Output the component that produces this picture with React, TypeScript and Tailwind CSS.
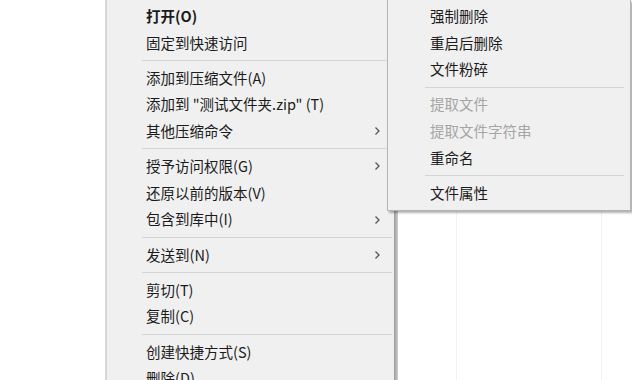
import React from "react";

type Item = { label: string; bold?: boolean; arrow?: boolean; disabled?: boolean } | "sep";

const mainItems: Item[] = [
  { label: "打开(O)", bold: true },
  { label: "固定到快速访问" },
  "sep",
  { label: "添加到压缩文件(A)" },
  { label: "添加到 \"测试文件夹.zip\" (T)" },
  { label: "其他压缩命令", arrow: true },
  "sep",
  { label: "授予访问权限(G)", arrow: true },
  { label: "还原以前的版本(V)" },
  { label: "包含到库中(I)", arrow: true },
  "sep",
  { label: "发送到(N)", arrow: true },
  "sep",
  { label: "剪切(T)" },
  { label: "复制(C)" },
  "sep",
  { label: "创建快捷方式(S)" },
  { label: "删除(D)" },
];

const subItems: Item[] = [
  { label: "强制删除" },
  { label: "重启后删除" },
  { label: "文件粉碎" },
  "sep",
  { label: "提取文件", disabled: true },
  { label: "提取文件字符串", disabled: true },
  { label: "重命名" },
  "sep",
  { label: "文件属性" },
];

const font = { fontFamily: '"Microsoft YaHei", "Noto Sans CJK SC", "Noto Sans", sans-serif' };

function Chevron() {
  return (
    <svg width="7" height="10" viewBox="0 0 7 10" className="text-[#555]">
      <path d="M1.5 1.5 L5 5 L1.5 8.5" fill="none" stroke="currentColor" strokeWidth="1.3" />
    </svg>
  );
}

export default function App() {
  return (
    <div className="relative w-[632px] h-[380px] bg-white overflow-hidden flex" style={font}>
      <div className="w-[105px] shrink-0 bg-white" />
      {/* main menu */}
      <div className="w-[293px] shrink-0 h-full bg-[#f0f0f0] border-l-2 border-[#d6d6d6] flex">
        <div className="flex-1 flex flex-col pt-[3px]">
          {mainItems.map((it, i) =>
            it === "sep" ? (
              <div key={i} className="h-[8.6px] shrink-0 flex items-center pl-[35px] pr-[2px]">
                <div className="h-px w-full bg-[#d4d4d4]" />
              </div>
            ) : (
              <div
                key={i}
                className={`h-[26.6px] shrink-0 flex items-center pl-[39px] pr-[13px] text-[14.5px] leading-none text-[#1b1b1b] ${it.bold ? "font-bold" : ""}`}
              >
                <span className="flex-1 whitespace-nowrap">{it.label}</span>
                {it.arrow && <Chevron />}
              </div>
            )
          )}
        </div>
        <div className="w-[4px] h-full bg-gradient-to-r from-[#9a9a9a] to-[#cfcfcf]" />
      </div>
      {/* background window */}
      <div className="flex-1 h-full bg-white flex">
        <div className="w-[58px]" />
        <div className="w-px h-full bg-[#f0f3f3]" />
        <div className="w-[144px]" />
        <div className="w-px h-full bg-[#f0f2f2]" />
      </div>
      {/* submenu */}
      <div className="absolute left-[387px] top-0 w-[244px] h-[211px] bg-[#f0f0f0] border border-[#b4b4b4] border-t-0 shadow-[2px_2px_2px_rgba(0,0,0,0.3)] flex flex-col pt-[3px]">
        {subItems.map((it, i) =>
          it === "sep" ? (
            <div key={i} className="h-[8.6px] shrink-0 flex items-center pl-[37px] pr-[6px]">
              <div className="h-px w-full bg-[#d4d4d4]" />
            </div>
          ) : (
            <div
              key={i}
              className={`h-[26.6px] shrink-0 flex items-center pl-[42px] text-[14.5px] leading-none ${it.disabled ? "text-[#a5a5a5]" : "text-[#1b1b1b]"}`}
            >
              <span className="whitespace-nowrap">{it.label}</span>
            </div>
          )
        )}
      </div>
    </div>
  );
}
